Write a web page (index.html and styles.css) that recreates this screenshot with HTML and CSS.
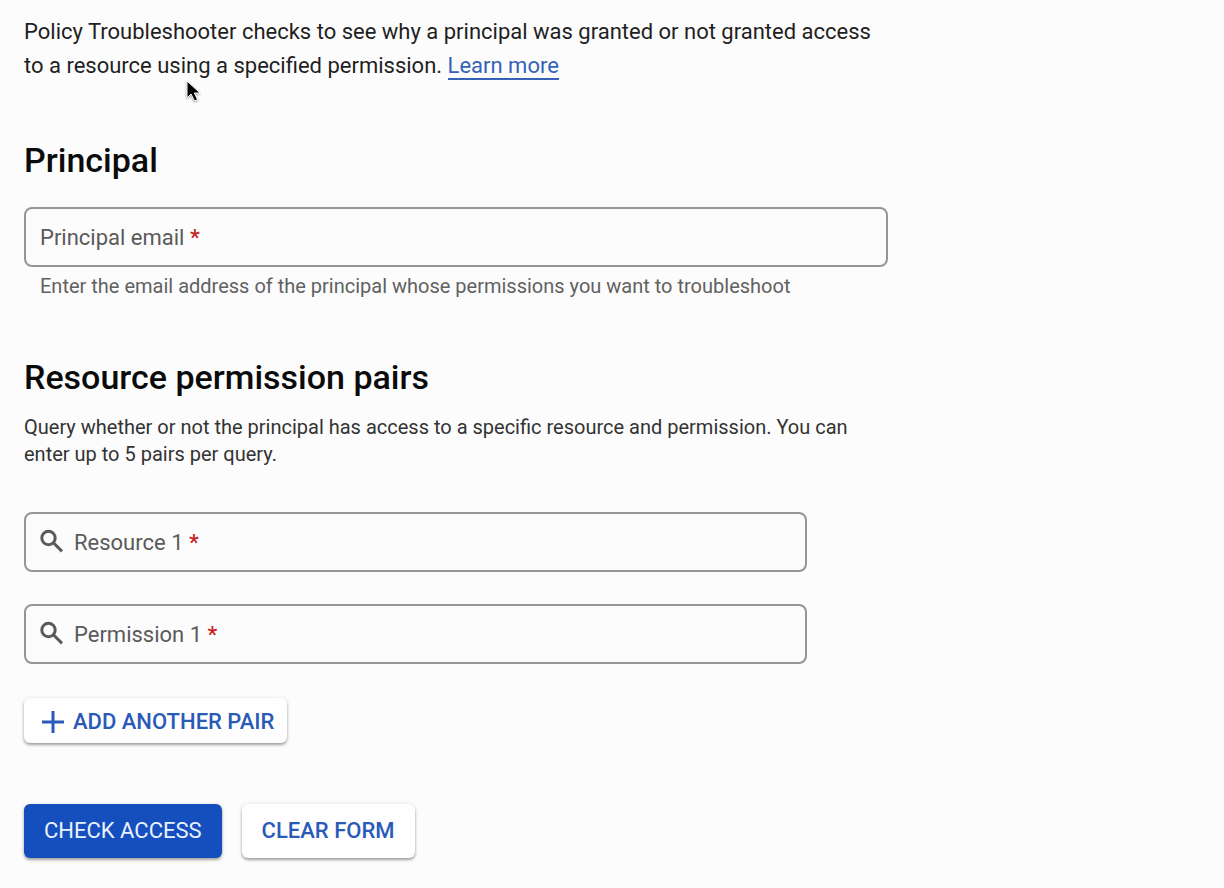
FILE: index.html
```
<!DOCTYPE html>
<html lang="en">
<head>
<meta charset="utf-8">
<meta name="viewport" content="width=device-width, initial-scale=1">
<title>Policy Troubleshooter</title>
<link rel="stylesheet" href="styles.css">
</head>
<body>
<main class="page">
  <p class="intro">Policy Troubleshooter checks to see why a principal was granted or not granted access to a resource using a specified permission. <a class="link" href="#">Learn more</a></p>

  <form class="form">
    <section class="section">
      <h2 class="heading">Principal</h2>
      <div class="field">
        <label class="label" for="principal">Principal email <span class="required">*</span></label>
        <input class="input" id="principal" type="email" required aria-describedby="principal-hint">
      </div>
      <p class="hint" id="principal-hint">Enter the email address of the principal whose permissions you want to troubleshoot</p>
    </section>

    <section class="section">
      <h2 class="heading">Resource permission pairs</h2>
      <p class="description">Query whether or not the principal has access to a specific resource and permission. You can enter up to 5 pairs per query.</p>
      <div class="pair">
        <div class="field">
          <svg class="icon" viewBox="0 0 24 26" aria-hidden="true"><circle cx="8.5" cy="9" r="6.7"/><path d="M13.4 13.8 22 22.4"/></svg>
          <label class="label" for="resource">Resource 1 <span class="required">*</span></label>
          <input class="input" id="resource" type="text" required>
        </div>
        <div class="field">
          <svg class="icon" viewBox="0 0 24 26" aria-hidden="true"><circle cx="8.5" cy="9" r="6.7"/><path d="M13.4 13.8 22 22.4"/></svg>
          <label class="label" for="permission">Permission 1 <span class="required">*</span></label>
          <input class="input" id="permission" type="text" required>
        </div>
      </div>
      <button class="button button-add" type="button">
        <svg class="plus" viewBox="0 0 22 22" aria-hidden="true"><path d="M11 0v22M0 11h22"/></svg>
        Add another pair
      </button>
    </section>

    <div class="actions">
      <button class="button button-primary" type="submit">Check access</button>
      <button class="button" type="reset">Clear form</button>
    </div>
  </form>
</main>
<svg class="pointer" viewBox="0 0 16 24" aria-hidden="true"><path d="M2 2v17l4-4 3.5 7 3-1.500-3.200-6.500H15z"/></svg>
</body>
</html>
```
FILE: styles.css
```
* {
  box-sizing: border-box;
}

body {
  margin: 0;
  background: #fcfcfc;
  color: #1f1f1f;
  font-family: Roboto, Arial, sans-serif;
}

.page {
  max-width: 912px;
  padding: 15px 24px 24px;
}

.intro {
  margin: 0;
  font-size: 22px;
  line-height: 34px;
}

.link {
  border-bottom: 2px solid #3562b8;
  color: #3562b8;
  text-decoration: none;
}

.section {
  margin-top: 57px;
}

.heading {
  margin: 0;
  color: #0b0b0b;
  font-size: 34px;
  font-weight: 500;
  line-height: 40px;
}

.field {
  display: flex;
  align-items: center;
  gap: 10px;
  height: 60px;
  padding: 0 14px;
  border: 2px solid #959595;
  border-radius: 8px;
}

.heading + .field {
  margin-top: 27px;
}

.label {
  padding-top: 2px;
  color: #5a5a5a;
  font-size: 22px;
  line-height: 28px;
  white-space: nowrap;
}

.required {
  color: #c5221f;
  font-weight: 500;
}

.input {
  flex: 1;
  min-width: 0;
  border: 0;
  outline: 0;
  background: transparent;
  font: inherit;
  font-size: 22px;
}

.hint {
  margin: 5px 16px 0;
  color: #616161;
  font-size: 20px;
  line-height: 28px;
}

.description {
  margin: 17px 0 0;
  color: #333;
  font-size: 20px;
  line-height: 27px;
}

.pair {
  display: grid;
  gap: 32px;
  margin: 44px 81px 34px 0;
}

.icon {
  width: 24px;
  height: 26px;
  flex: none;
  fill: none;
  stroke: #5a5a5a;
  stroke-width: 3;
}

.button {
  display: inline-flex;
  align-items: center;
  gap: 9px;
  padding: 13px 20px;
  border: 0;
  border-radius: 6px;
  background: #fefefe;
  box-shadow: 0 2px 3px rgba(0, 0, 0, 0.34), 0 0 4px rgba(0, 0, 0, 0.08);
  color: #2a5ab8;
  font-family: inherit;
  font-size: 22px;
  font-weight: 500;
  line-height: 28px;
  text-transform: uppercase;
}

.button-add {
  padding: 10px 13px 7px 18px;
}

.button-primary {
  background: #154fbd;
  color: #eaf1ff;
  font-weight: 400;
}

.plus {
  width: 22px;
  height: 22px;
  fill: none;
  stroke: #2a5ab8;
  stroke-width: 3;
}

.actions {
  display: flex;
  gap: 20px;
  margin-top: 61px;
}

.pointer {
  position: absolute;
  top: 79px;
  left: 185px;
  width: 16px;
  height: 24px;
  fill: #000;
  stroke: #fff;
  stroke-width: 1;
  filter: drop-shadow(0 1px 1px rgba(0, 0, 0, 0.4));
  pointer-events: none;
}
```
